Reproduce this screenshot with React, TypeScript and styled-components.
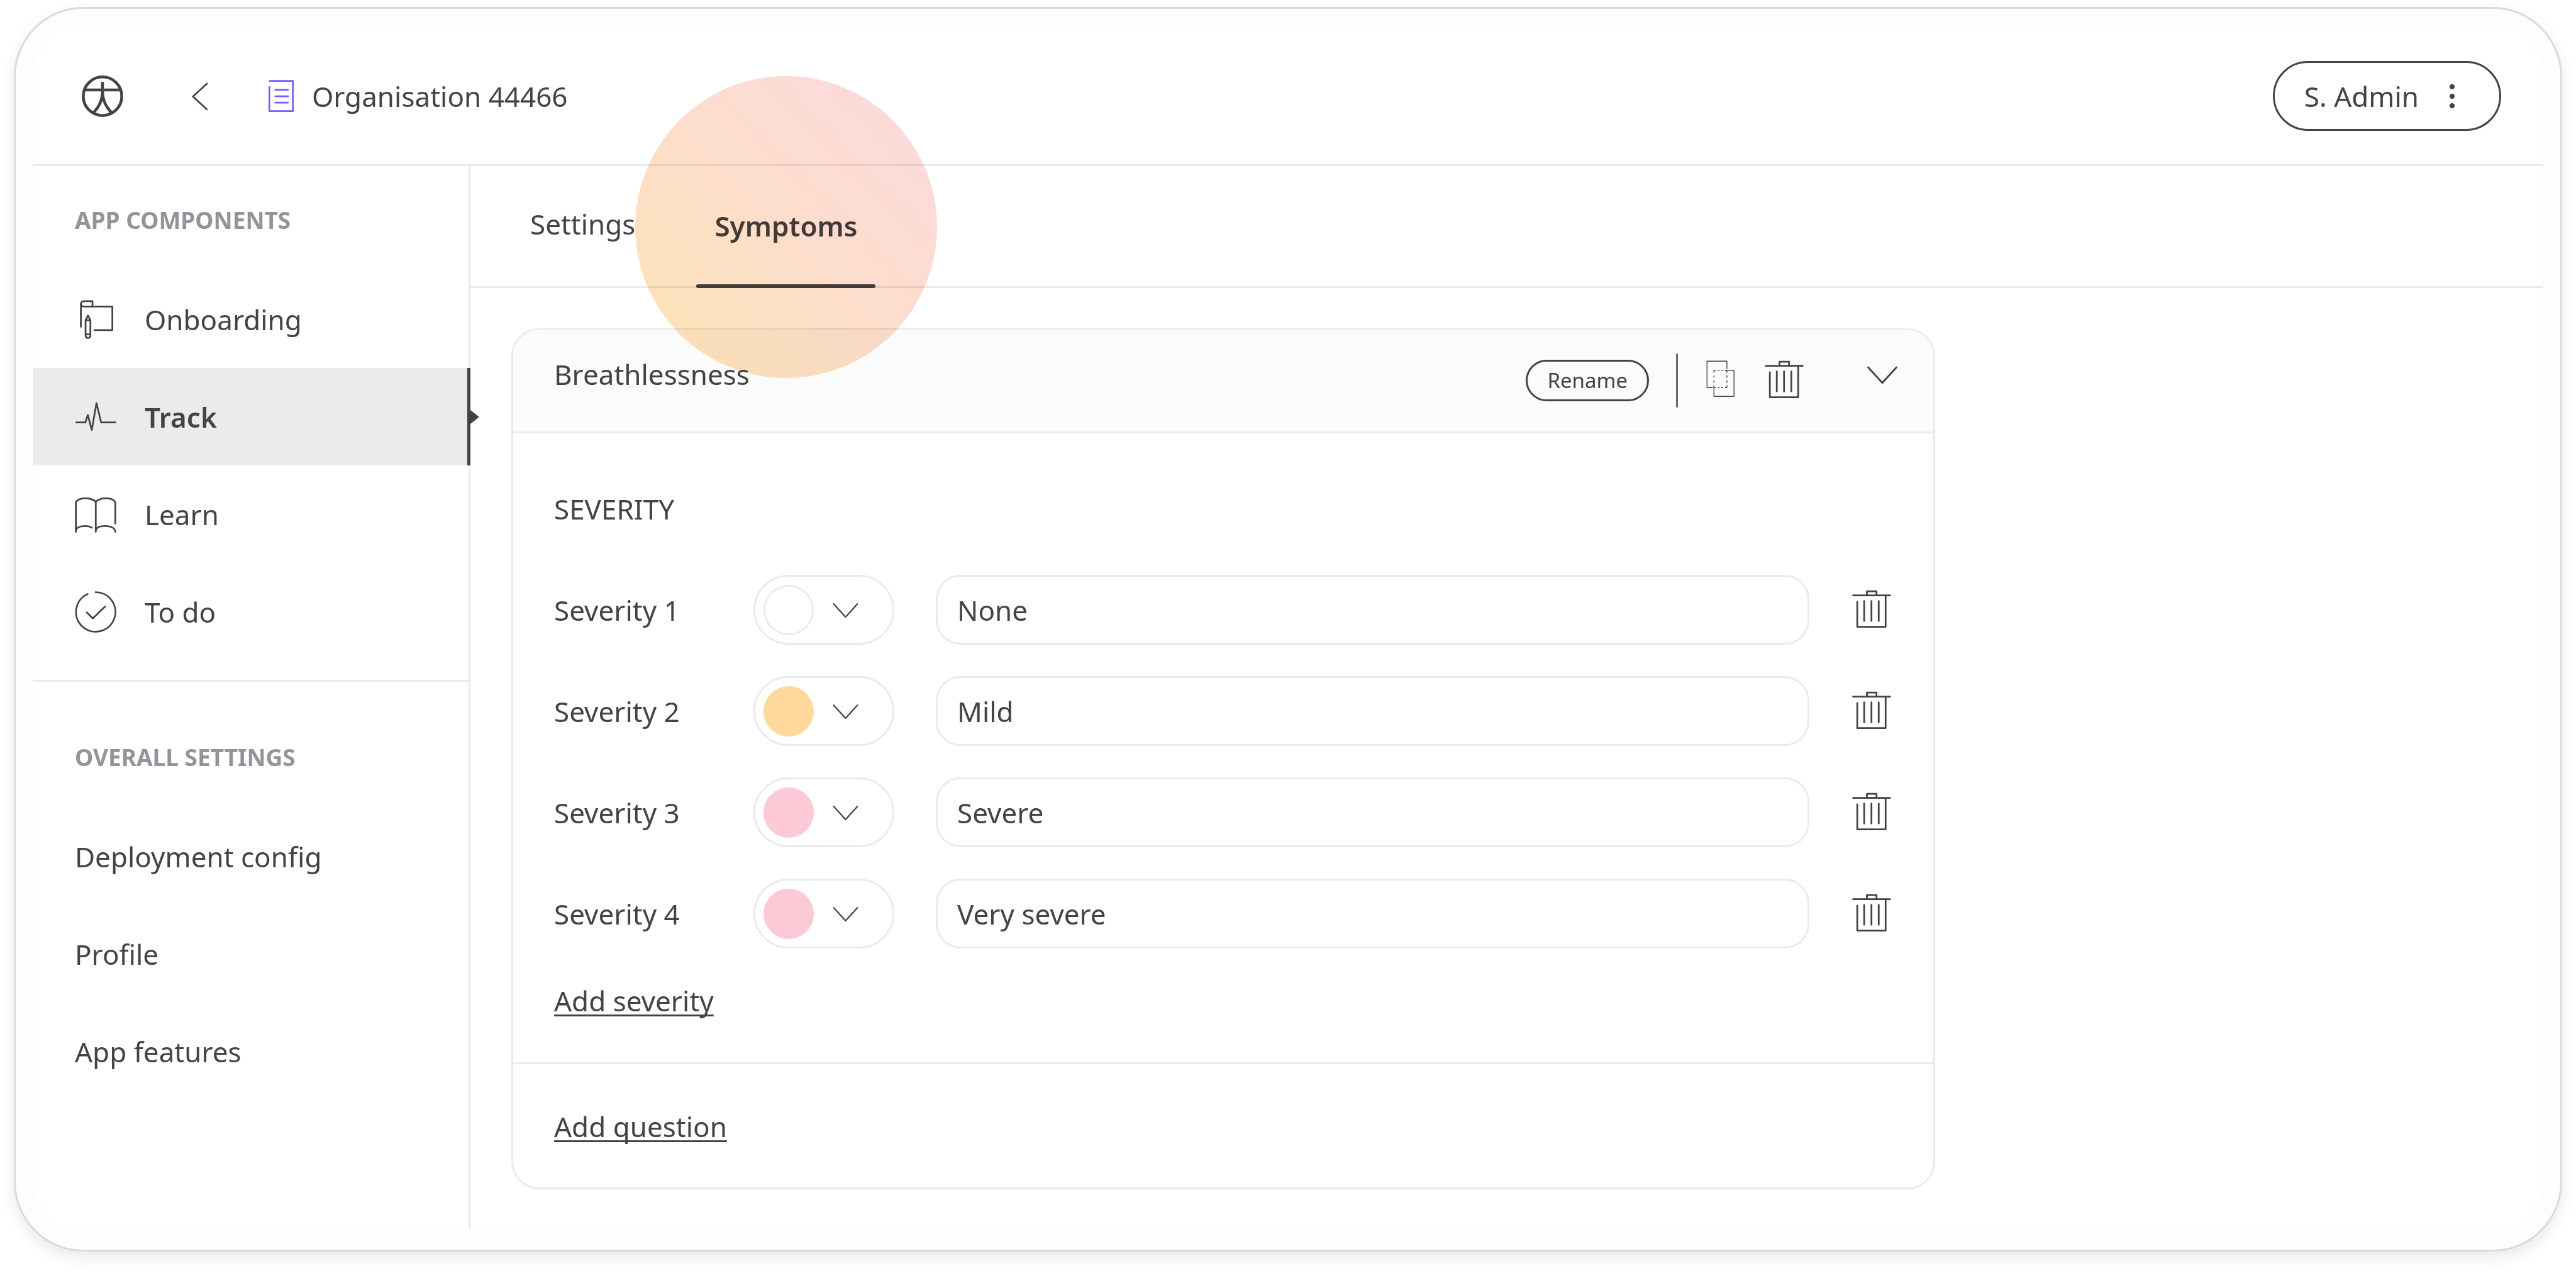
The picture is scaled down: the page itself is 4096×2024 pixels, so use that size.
import React, { useState } from "react";
import styled, { createGlobalStyle, css } from "styled-components";

const ink = "#434247";
const line = "#ebebeb";

const GlobalStyle = createGlobalStyle`
  *, *::before, *::after { box-sizing: border-box; }
  body {
    margin: 0;
    background: #fff;
    color: ${ink};
    font-family: "Noto Sans", "Open Sans", sans-serif;
    font-size: 44px;
    line-height: 60px;
  }
  button, input, select { font: inherit; color: inherit; }
  button { background: none; border: 0; padding: 0; cursor: pointer; }
  a { color: inherit; text-decoration: none; }
  h1, h2, h3, p { margin: 0; font: inherit; }
`;

const Page = styled.div`
  min-height: 100vh;
  padding: 11px 22px 34px;
  display: flex;
`;

const Frame = styled.div`
  flex: 1;
  display: flex;
  padding: 27px 28px 31px;
  border: 3px solid #d9dadb;
  border-radius: 111px;
  background: #fdfdfd;
  box-shadow: 0 9px 25px rgba(0, 0, 0, 0.09);
`;

const Screen = styled.div`
  flex: 1;
  min-width: 0;
  display: flex;
  flex-direction: column;
  border-radius: 83px;
  background: #fff;
`;

const TopBar = styled.header`
  display: flex;
  align-items: center;
  height: 223px;
  padding: 3px 66px 0 77px;
  border-bottom: 3px solid ${line};
`;

const Icon = styled.svg<{ $thin?: boolean; $size?: number }>`
  display: block;
  flex: none;
  width: ${(p) => p.$size ?? 66}px;
  height: ${(p) => p.$size ?? 66}px;
  fill: none;
  stroke: currentColor;
  stroke-width: ${(p) => (p.$thin ? 0.5 : 1)};
  stroke-linecap: round;
  stroke-linejoin: round;
`;

const IconButton = styled.button`
  flex: none;
  display: flex;
`;

const HomeLink = styled.a`
  display: flex;
`;

const BackButton = styled(IconButton)`
  margin-left: 89px;
`;

const OrgName = styled.h1`
  display: flex;
  align-items: center;
  gap: 16px;
  margin-left: 63px;

  svg { color: #7a5cfa; }
`;

const UserButton = styled.button`
  display: flex;
  align-items: center;
  gap: 20px;
  height: 111px;
  margin-left: auto;
  padding: 0 42px 0 47px;
  border: 3px solid ${ink};
  border-radius: 56px;
`;

const Columns = styled.div`
  flex: 1;
  display: flex;
`;

const Sidebar = styled.nav`
  flex: none;
  width: 695px;
  border-right: 3px solid ${line};
`;

const NavSection = styled.section`
  & + & {
    margin-top: 31px;
    padding-top: 34px;
    border-top: 3px solid ${line};
  }
`;

const NavTitle = styled.h2`
  padding: 64px 66px 58px;
  font-size: 37px;
  font-weight: 700;
  line-height: 44px;
  color: #919499;
`;

const activeItem = css`
  position: relative;
  background: ${line};
  border-right: 5px solid ${ink};
  margin-right: -3px;
  font-weight: 600;

  &::after {
    content: "";
    position: absolute;
    left: calc(100% + 5px);
    top: 50%;
    border: 11px solid transparent;
    border-left: 14px solid ${ink};
    border-right: 0;
    transform: translateY(-50%);
  }
`;

const NavItem = styled.a<{ $active?: boolean }>`
  display: flex;
  align-items: center;
  gap: 45px;
  height: 155px;
  padding: 0 66px;
  ${(p) => p.$active && activeItem}
`;

const Main = styled.main`
  flex: 1;
  min-width: 0;
`;

const Tabs = styled.div`
  display: flex;
  gap: 68px;
  height: 194px;
  padding: 0 66px;
  border-bottom: 3px solid ${line};
`;

const Tab = styled.button<{ $active?: boolean }>`
  position: relative;
  height: 194px;
  padding: 0 29px ${(p) => (p.$active ? 4 : 10)}px;
  font-weight: ${(p) => (p.$active ? 600 : 400)};
`;

const TabMarker = styled.span`
  position: absolute;
  left: 0;
  right: 0;
  bottom: 0;
  height: 6px;
  border-radius: 3px;
  background: ${ink};
`;

const Spotlight = styled.span`
  position: absolute;
  left: 50%;
  top: 50%;
  width: 480px;
  height: 480px;
  border-radius: 50%;
  background: linear-gradient(45deg, #fee4b4 0%, #fdddcb 50%, #fcd8e0 100%);
  mix-blend-mode: multiply;
  transform: translate(-50%, -50%);
  z-index: 1;
  pointer-events: none;
`;

const Content = styled.div`
  padding: 64px 65px;
`;

const Card = styled.section`
  max-width: 2264px;
  border: 3px solid ${line};
  border-radius: 44px;
  overflow: hidden;
`;

const CardHeader = styled.header`
  display: flex;
  align-items: flex-start;
  padding: 37px 48px 38px 65px;
  border-bottom: 3px solid ${line};
  background: #fbfbfb;
`;

const CardTitle = styled.h2`
  flex: 1;
  line-height: 66px;
`;

const Actions = styled.div`
  display: flex;
  align-items: center;
  height: 86px;
  gap: 35px;
  margin-right: 90px;
`;

const RenameButton = styled.button`
  height: 66px;
  margin-right: 8px;
  padding: 0 31px;
  border: 3px solid ${ink};
  border-radius: 33px;
  font-size: 33px;
  line-height: 44px;
`;

const Rule = styled.span`
  width: 3px;
  height: 86px;
  border-radius: 2px;
  background: #69686c;
`;

const CardBody = styled.div`
  padding: 90px 65px 68px;
`;

const CardFooter = styled.div`
  padding: 69px 65px 67px;
  border-top: 3px solid ${line};
`;

const SeverityList = styled.div`
  display: grid;
  gap: 50px;
  margin: 75px 0 53px;
`;

const SeverityRow = styled.div`
  display: grid;
  grid-template-columns: 251px 224px 1fr 66px;
  column-gap: 66px;
  align-items: center;
`;

const Picker = styled.div`
  position: relative;
  display: flex;
  align-items: center;
  gap: 23px;
  height: 111px;
  padding: 0 13px;
  border: 3px solid ${line};
  border-radius: 56px;
`;

const Swatch = styled.span<{ $color: string }>`
  width: 80px;
  height: 80px;
  border: 3px solid ${(p) => (p.$color === "#ffffff" ? line : p.$color)};
  border-radius: 50%;
  background: ${(p) => p.$color};
`;

const PickerSelect = styled.select`
  position: absolute;
  inset: 0;
  width: 100%;
  height: 100%;
  opacity: 0;
  cursor: pointer;
`;

const TextInput = styled.input`
  width: 100%;
  height: 111px;
  padding: 0 31px;
  border: 3px solid ${line};
  border-radius: 39px;
  background: none;
`;

const AddButton = styled.button`
  display: block;
  text-decoration: underline;
  text-decoration-thickness: 3px;
  text-decoration-skip-ink: none;
  text-underline-offset: 5px;
`;

const Logo = () => (
  <Icon viewBox="0 0 24 24">
    <g strokeWidth="1.65" strokeLinecap="butt">
      <circle cx="12" cy="12" r="11.15" />
      <path d="M1.4 8.4H22.6M12 3.75V9C12 13.5 10.2 18 6.8 21.4M12 9C12 13.5 13.8 18 17.2 21.4" />
    </g>
  </Icon>
);

const BackIcon = () => (
  <Icon viewBox="0 0 24 24"><path d="M16 4.7L7.9 12.2L16 19.6" /></Icon>
);

const DocIcon = () => (
  <Icon viewBox="0 0 24 24"><path d="M5.4 3.1H18.8V20.6H5.2V6.7M8.6 8.3H16M8.6 12H16M8.6 15.7H16" /></Icon>
);

const MoreIcon = () => (
  <Icon viewBox="0 0 24 24">
    <g fill="currentColor" stroke="none">
      <circle cx="12" cy="6.5" r="1.5" />
      <circle cx="12" cy="12" r="1.5" />
      <circle cx="12" cy="17.5" r="1.5" />
    </g>
  </Icon>
);

const OnboardingIcon = () => (
  <Icon viewBox="0 0 24 24">
    <path d="M3.5 16.2V3C3.5 2.1 4.2 1.4 5.1 1.4H10.2V4.5M3.6 3C3.6 3.8 4.2 4.5 5.1 4.5H21.7V18.1H11.3" />
    <path d="M6.2 12.4L7.6 9.7L9 12.4V21.2C9 23.2 6.2 23.2 6.2 21.2ZM6.2 12.4H9M6.2 20.6H9" />
  </Icon>
);

const TrackIcon = () => (
  <Icon viewBox="0 0 24 24"><path d="M.8 15.1H6.1L7.5 10.8L9.8 19.5L12.5 4L15.2 15.1H23.5" /></Icon>
);

const LearnIcon = () => (
  <Icon viewBox="0 0 24 24">
    <path d="M.6 22V5.4C.6 3.6 3.4 2.6 6.2 2.6S12.1 3.9 12.1 5.2C12.1 3.9 15 2.6 17.9 2.6S23.4 3.6 23.4 5.4V17.2M12.1 5.2V22" />
    <path d="M.6 21C1.2 19.4 3.6 18.7 6 18.7C7.4 18.7 8.8 19 9.8 19.6M12.1 21C12.6 19.4 15 18.7 17.4 18.7C21 18.7 23.4 20 23.4 22" />
  </Icon>
);

const TodoIcon = () => (
  <Icon viewBox="0 0 24 24"><path d="M12 .6A11.4 11.4 0 1 1 7.4 1.6M6.9 12.3L10.4 15.7L17.5 8.8" /></Icon>
);

const CopyIcon = () => (
  <Icon viewBox="0 0 24 24" $thin>
    <path d="M15.6 5.2V.8H4.1V16.1H7.3M15.2 6.1H19.7V21.2H8.1V15.4" />
    <path strokeDasharray="1.1 1.03" strokeLinecap="butt" d="M8.1 6.1H15.6M8.1 16.1H15.6" />
    <path strokeDasharray="1.4 1.47" strokeLinecap="butt" d="M8.1 6.1V16.1M15.6 6.1V16.1" />
  </Icon>
);

const TrashIcon = () => (
  <Icon viewBox="0 0 24 24">
    <path d="M1.3 3.5H22.7M9.3 3.5V1.1H14.8V3.5M3.7 7.2V21.7H20.1V3.5M7.7 6.8V18.3M11.9 6.8V18.3M16.1 6.8V18.3" />
  </Icon>
);

const ChevronDown = ({ size }: { size?: number }) => (
  <Icon viewBox="0 0 24 24" $size={size}><path d="M3.8 8L12 17L20.2 8" /></Icon>
);

const components = [
  { label: "Onboarding", icon: <OnboardingIcon /> },
  { label: "Track", icon: <TrackIcon />, active: true },
  { label: "Learn", icon: <LearnIcon /> },
  { label: "To do", icon: <TodoIcon /> },
];

const settings = ["Deployment config", "Profile", "App features"];

const palette = [
  { name: "White", value: "#ffffff" },
  { name: "Amber", value: "#ffd99b" },
  { name: "Pink", value: "#fccad7" },
];

const initialSeverities = [
  { text: "None", color: "#ffffff" },
  { text: "Mild", color: "#ffd99b" },
  { text: "Severe", color: "#fccad7" },
  { text: "Very severe", color: "#fccad7" },
];

export default function App() {
  const [severities, setSeverities] = useState(initialSeverities);
  const update = (index: number, change: Partial<{ text: string; color: string }>) =>
    setSeverities((rows) => rows.map((row, i) => (i === index ? { ...row, ...change } : row)));

  return (
    <>
      <GlobalStyle />
      <Page>
        <Frame>
          <Screen>
            <TopBar>
              <HomeLink href="#home" aria-label="Home"><Logo /></HomeLink>
              <BackButton aria-label="Back"><BackIcon /></BackButton>
              <OrgName><DocIcon />Organisation 44466</OrgName>
              <UserButton>S. Admin<MoreIcon /></UserButton>
            </TopBar>
            <Columns>
              <Sidebar>
                <NavSection>
                  <NavTitle>APP COMPONENTS</NavTitle>
                  {components.map((item) => (
                    <NavItem key={item.label} href="#component" $active={item.active}>
                      {item.icon}
                      {item.label}
                    </NavItem>
                  ))}
                </NavSection>
                <NavSection>
                  <NavTitle>OVERALL SETTINGS</NavTitle>
                  {settings.map((label) => (
                    <NavItem key={label} href="#setting">{label}</NavItem>
                  ))}
                </NavSection>
              </Sidebar>
              <Main>
                <Tabs role="tablist">
                  <Tab role="tab" aria-selected={false}>Settings</Tab>
                  <Tab role="tab" aria-selected $active>
                    Symptoms
                    <TabMarker />
                    <Spotlight />
                  </Tab>
                </Tabs>
                <Content>
                  <Card>
                    <CardHeader>
                      <CardTitle>Breathlessness</CardTitle>
                      <Actions>
                        <RenameButton>Rename</RenameButton>
                        <Rule />
                        <IconButton aria-label="Duplicate"><CopyIcon /></IconButton>
                        <IconButton aria-label="Delete"><TrashIcon /></IconButton>
                      </Actions>
                      <IconButton aria-label="Collapse"><ChevronDown /></IconButton>
                    </CardHeader>
                    <CardBody>
                      <h3>SEVERITY</h3>
                      <SeverityList>
                        {severities.map((row, i) => (
                          <SeverityRow key={i}>
                            <label htmlFor={`severity-${i}`}>Severity {i + 1}</label>
                            <Picker>
                              <Swatch $color={row.color} />
                              <ChevronDown size={55} />
                              <PickerSelect
                                aria-label={`Severity ${i + 1} colour`}
                                value={row.color}
                                onChange={(e) => update(i, { color: e.target.value })}
                              >
                                {palette.map((c) => (
                                  <option key={c.name} value={c.value}>{c.name}</option>
                                ))}
                              </PickerSelect>
                            </Picker>
                            <TextInput
                              id={`severity-${i}`}
                              value={row.text}
                              onChange={(e) => update(i, { text: e.target.value })}
                            />
                            <IconButton aria-label={`Delete severity ${i + 1}`}><TrashIcon /></IconButton>
                          </SeverityRow>
                        ))}
                      </SeverityList>
                      <AddButton>Add severity</AddButton>
                    </CardBody>
                    <CardFooter>
                      <AddButton>Add question</AddButton>
                    </CardFooter>
                  </Card>
                </Content>
              </Main>
            </Columns>
          </Screen>
        </Frame>
      </Page>
    </>
  );
}
